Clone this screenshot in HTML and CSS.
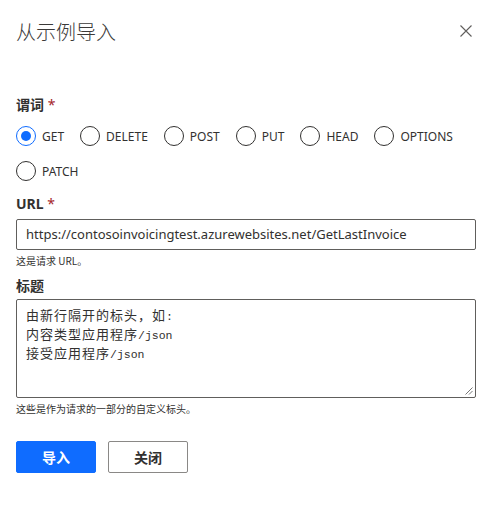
FILE: index.html
```html
<!DOCTYPE html>
<html lang="zh-CN">
<head>
<meta charset="utf-8">
<title>从示例导入</title>
<link rel="stylesheet" href="styles.css">
</head>
<body>
<div class="dialog">
  <div class="header">
    <h1 class="title">从示例导入</h1>
    <button class="close" aria-label="关闭">
      <svg width="12" height="12" viewBox="0 0 12 12"><path d="M0.5 0.5L11.5 11.5M11.5 0.5L0.5 11.5" stroke="#605e5c" stroke-width="1.1" fill="none"/></svg>
    </button>
  </div>

  <div class="field verb">
    <div class="label">谓词 <span class="req">*</span></div>
    <div class="radios">
      <label class="radio checked"><span class="circle"></span><span class="rtext">GET</span></label>
      <label class="radio"><span class="circle"></span><span class="rtext">DELETE</span></label>
      <label class="radio"><span class="circle"></span><span class="rtext">POST</span></label>
      <label class="radio"><span class="circle"></span><span class="rtext">PUT</span></label>
      <label class="radio"><span class="circle"></span><span class="rtext">HEAD</span></label>
      <label class="radio"><span class="circle"></span><span class="rtext">OPTIONS</span></label>
      <label class="radio"><span class="circle"></span><span class="rtext">PATCH</span></label>
    </div>
  </div>

  <div class="field url">
    <div class="label">URL <span class="req">*</span></div>
    <div class="input">https://contosoinvoicingtest.azurewebsites.net/GetLastInvoice</div>
    <div class="help">这是请求 URL。</div>
  </div>

  <div class="field headers">
    <div class="label">标题</div>
    <div class="textarea">
      <div class="line">由新行隔开的标头，如<span class="mono">:</span></div>
      <div class="line">内容类型应用程序<span class="mono">/json</span></div>
      <div class="line">接受应用程序<span class="mono">/json</span></div>
      <svg class="grip" width="8" height="8" viewBox="0 0 8 8"><path d="M7.5 0.5L0.5 7.5M7.5 4L4 7.5" stroke="#767676" stroke-width="1" fill="none"/></svg>
    </div>
    <div class="help">这些是作为请求的一部分的自定义标头。</div>
  </div>

  <div class="actions">
    <button class="btn primary">导入</button>
    <button class="btn secondary">关闭</button>
  </div>
</div>
</body>
</html>
```

FILE: styles.css
```css
* { box-sizing: border-box; }
html, body { margin: 0; padding: 0; background: #fff; }
body {
  font-family: "Noto Sans", "Noto Sans CJK SC", sans-serif;
  color: #323130;
  font-size: 14px;
}
.dialog {
  width: 496px;
  padding: 18px 20px 0 16px;
}
.header {
  display: flex;
  justify-content: space-between;
  align-items: flex-start;
  height: 77px;
}
.title {
  margin: 0;
  font-size: 20px;
  font-weight: 300;
  line-height: 28px;
  color: #3b3a39;
  font-family: "Noto Sans CJK SC", sans-serif;
}
.close {
  border: 0;
  background: none;
  padding: 0;
  margin: 7px 4px 0 0;
  width: 12px;
  height: 12px;
  display: flex;
}
.label {
  font-weight: 700;
  font-size: 14px;
  line-height: 20px;
  height: 20px;
}
.req { color: #a4262c; font-weight: 400; }
.verb .label { margin-bottom: 11px; }
.radios {
  display: flex;
  flex-wrap: wrap;
  column-gap: 16px;
  row-gap: 15px;
  width: 460px;
}
.radio {
  display: flex;
  align-items: center;
  height: 20px;
  font-size: 12px;
  color: #323130;
}
.circle {
  width: 20px;
  height: 20px;
  border: 1px solid #323130;
  border-radius: 50%;
  margin-right: 6px;
  display: flex;
  align-items: center;
  justify-content: center;
}
.radio.checked .circle { border-color: #0f6cff; }
.radio.checked .circle::after {
  content: "";
  width: 10px;
  height: 10px;
  border-radius: 50%;
  background: #0f6cff;
}
.url { margin-top: 13px; }
.url .label { margin-bottom: 5px; }
.input {
  height: 31px;
  border: 1px solid #605e5c;
  border-radius: 2px;
  padding: 0 9px;
  line-height: 29px;
  font-size: 13px;
  color: #323130;
  white-space: nowrap;
}
.help {
  font-size: 10px;
  line-height: 14px;
  height: 14px;
  color: #323130;
  margin-top: 4px;
  font-family: "Noto Sans CJK SC", sans-serif;
}
.headers { margin-top: 8px; }
.headers .label { margin-bottom: 3px; }
.textarea {
  position: relative;
  height: 99px;
  border: 1px solid #605e5c;
  border-radius: 2px;
  padding: 6px 9px;
  font-family: "Noto Sans CJK SC", monospace;
  font-size: 13px;
  letter-spacing: 1px;
  line-height: 17px;
  color: #323130;
}
.mono { font-family: "Liberation Mono", monospace; font-size: 11.5px; letter-spacing: 0; }
.grip { position: absolute; right: 2px; bottom: 2px; }
.headers .help { margin-top: 4px; }
.actions {
  display: flex;
  gap: 12px;
  margin-top: 25px;
}
.btn {
  width: 80px;
  height: 32px;
  border-radius: 2px;
  font-family: "Noto Sans CJK SC", sans-serif;
  font-weight: 700;
  font-size: 14px;
  padding: 0;
}
.primary { background: #0f6cff; border: 1px solid #0f6cff; color: #fff; }
.secondary { background: #fff; border: 1px solid #8a8886; color: #323130; }
```
